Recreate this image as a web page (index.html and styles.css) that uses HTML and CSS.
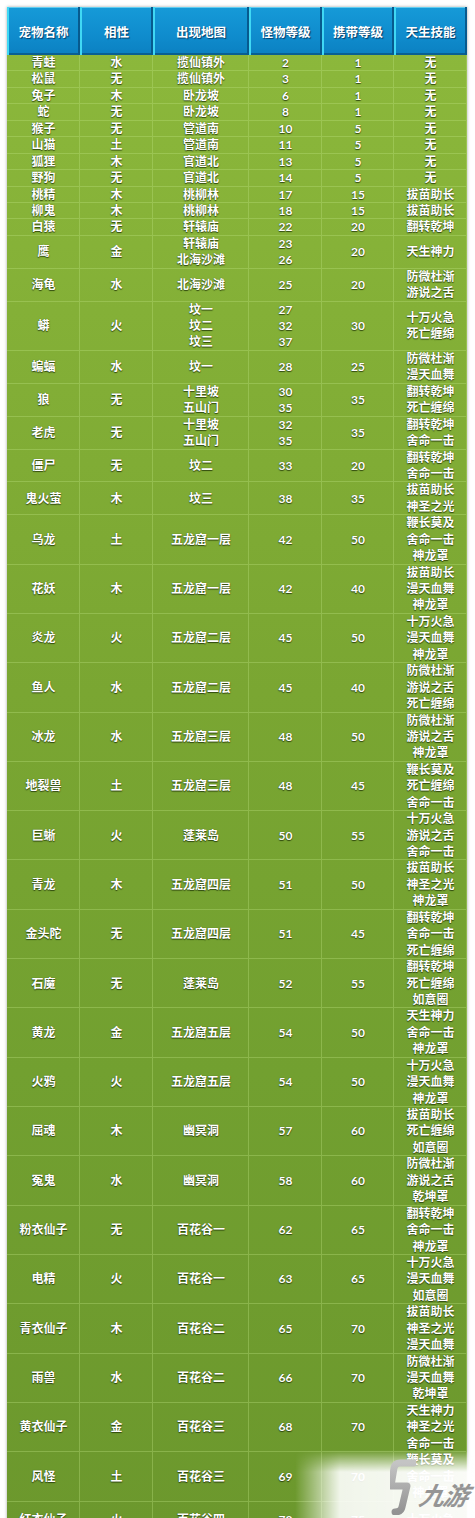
FILE: index.html
```html
<!DOCTYPE html>
<html lang="zh">
<head>
<meta charset="utf-8">
<title>宠物表</title>
<link rel="stylesheet" href="styles.css">
</head>
<body>
<div class="page">
  <table class="pets">
    <colgroup>
      <col class="c1"><col class="c2"><col class="c3"><col class="c4"><col class="c5"><col class="c6">
    </colgroup>
    <thead>
      <tr><th>宠物名称</th><th>相性</th><th>出现地图</th><th>怪物等级</th><th>携带等级</th><th>天生技能</th></tr>
    </thead>
    <tbody>
      <tr><td>青蛙</td><td>水</td><td>揽仙镇外</td><td>2</td><td>1</td><td>无</td></tr>
      <tr><td>松鼠</td><td>无</td><td>揽仙镇外</td><td>3</td><td>1</td><td>无</td></tr>
      <tr><td>兔子</td><td>木</td><td>卧龙坡</td><td>6</td><td>1</td><td>无</td></tr>
      <tr><td>蛇</td><td>无</td><td>卧龙坡</td><td>8</td><td>1</td><td>无</td></tr>
      <tr><td>猴子</td><td>无</td><td>管道南</td><td>10</td><td>5</td><td>无</td></tr>
      <tr><td>山猫</td><td>土</td><td>管道南</td><td>11</td><td>5</td><td>无</td></tr>
      <tr><td>狐狸</td><td>木</td><td>官道北</td><td>13</td><td>5</td><td>无</td></tr>
      <tr><td>野狗</td><td>无</td><td>官道北</td><td>14</td><td>5</td><td>无</td></tr>
      <tr><td>桃精</td><td>木</td><td>桃柳林</td><td>17</td><td>15</td><td>拔苗助长</td></tr>
      <tr><td>柳鬼</td><td>木</td><td>桃柳林</td><td>18</td><td>15</td><td>拔苗助长</td></tr>
      <tr><td>白猿</td><td>无</td><td>轩辕庙</td><td>22</td><td>20</td><td>翻转乾坤</td></tr>
      <tr><td>鹰</td><td>金</td><td>轩辕庙<br>北海沙滩</td><td>23<br>26</td><td>20</td><td>天生神力</td></tr>
      <tr><td>海龟</td><td>水</td><td>北海沙滩</td><td>25</td><td>20</td><td>防微杜渐<br>游说之舌</td></tr>
      <tr><td>蟒</td><td>火</td><td>坟一<br>坟二<br>坟三</td><td>27<br>32<br>37</td><td>30</td><td>十万火急<br>死亡缠绵</td></tr>
      <tr><td>蝙蝠</td><td>水</td><td>坟一</td><td>28</td><td>25</td><td>防微杜渐<br>漫天血舞</td></tr>
      <tr><td>狼</td><td>无</td><td>十里坡<br>五山门</td><td>30<br>35</td><td>35</td><td>翻转乾坤<br>死亡缠绵</td></tr>
      <tr><td>老虎</td><td>无</td><td>十里坡<br>五山门</td><td>32<br>35</td><td>35</td><td>翻转乾坤<br>舍命一击</td></tr>
      <tr><td>僵尸</td><td>无</td><td>坟二</td><td>33</td><td>20</td><td>翻转乾坤<br>舍命一击</td></tr>
      <tr><td>鬼火萤</td><td>木</td><td>坟三</td><td>38</td><td>35</td><td>拔苗助长<br>神圣之光</td></tr>
      <tr><td>乌龙</td><td>土</td><td>五龙窟一层</td><td>42</td><td>50</td><td>鞭长莫及<br>舍命一击<br>神龙罩</td></tr>
      <tr><td>花妖</td><td>木</td><td>五龙窟一层</td><td>42</td><td>40</td><td>拔苗助长<br>漫天血舞<br>神龙罩</td></tr>
      <tr><td>炎龙</td><td>火</td><td>五龙窟二层</td><td>45</td><td>50</td><td>十万火急<br>漫天血舞<br>神龙罩</td></tr>
      <tr><td>鱼人</td><td>水</td><td>五龙窟二层</td><td>45</td><td>40</td><td>防微杜渐<br>游说之舌<br>死亡缠绵</td></tr>
      <tr><td>冰龙</td><td>水</td><td>五龙窟三层</td><td>48</td><td>50</td><td>防微杜渐<br>游说之舌<br>神龙罩</td></tr>
      <tr><td>地裂兽</td><td>土</td><td>五龙窟三层</td><td>48</td><td>45</td><td>鞭长莫及<br>死亡缠绵<br>舍命一击</td></tr>
      <tr><td>巨蜥</td><td>火</td><td>蓬莱岛</td><td>50</td><td>55</td><td>十万火急<br>游说之舌<br>舍命一击</td></tr>
      <tr><td>青龙</td><td>木</td><td>五龙窟四层</td><td>51</td><td>50</td><td>拔苗助长<br>神圣之光<br>神龙罩</td></tr>
      <tr><td>金头陀</td><td>无</td><td>五龙窟四层</td><td>51</td><td>45</td><td>翻转乾坤<br>舍命一击<br>死亡缠绵</td></tr>
      <tr><td>石魔</td><td>无</td><td>蓬莱岛</td><td>52</td><td>55</td><td>翻转乾坤<br>死亡缠绵<br>如意圈</td></tr>
      <tr><td>黄龙</td><td>金</td><td>五龙窟五层</td><td>54</td><td>50</td><td>天生神力<br>舍命一击<br>神龙罩</td></tr>
      <tr><td>火鸦</td><td>火</td><td>五龙窟五层</td><td>54</td><td>50</td><td>十万火急<br>漫天血舞<br>神龙罩</td></tr>
      <tr><td>屈魂</td><td>木</td><td>幽冥洞</td><td>57</td><td>60</td><td>拔苗助长<br>死亡缠绵<br>如意圈</td></tr>
      <tr><td>冤鬼</td><td>水</td><td>幽冥洞</td><td>58</td><td>60</td><td>防微杜渐<br>游说之舌<br>乾坤罩</td></tr>
      <tr><td>粉衣仙子</td><td>无</td><td>百花谷一</td><td>62</td><td>65</td><td>翻转乾坤<br>舍命一击<br>神龙罩</td></tr>
      <tr><td>电精</td><td>火</td><td>百花谷一</td><td>63</td><td>65</td><td>十万火急<br>漫天血舞<br>如意圈</td></tr>
      <tr><td>青衣仙子</td><td>木</td><td>百花谷二</td><td>65</td><td>70</td><td>拔苗助长<br>神圣之光<br>漫天血舞</td></tr>
      <tr><td>雨兽</td><td>水</td><td>百花谷二</td><td>66</td><td>70</td><td>防微杜渐<br>漫天血舞<br>乾坤罩</td></tr>
      <tr><td>黄衣仙子</td><td>金</td><td>百花谷三</td><td>68</td><td>70</td><td>天生神力<br>神圣之光<br>舍命一击</td></tr>
      <tr><td>风怪</td><td>土</td><td>百花谷三</td><td>69</td><td>70</td><td>鞭长莫及<br>舍命一击<br>神龙罩</td></tr>
      <tr class="last"><td>红衣仙子</td><td>火</td><td>百花谷四</td><td>72</td><td>75</td><td>十万火急</td></tr>
    </tbody>
  </table>

  <div class="fade"></div>
  <div class="brand">
    <svg class="brand-mark" viewBox="0 0 26 56" width="26" height="56" aria-hidden="true">
      <defs>
        <linearGradient id="bm" x1="0" y1="0" x2="0" y2="1">
          <stop offset="0" stop-color="#c4c4c4"/>
          <stop offset="1" stop-color="#939393"/>
        </linearGradient>
      </defs>
      <path d="M24 4 L10 4 Q5 4 4 9 L1 27 L17 27 L12 48 Q11 53 5 53" fill="none" stroke="url(#bm)" stroke-width="7" stroke-linejoin="round" stroke-linecap="round"/>
    </svg>
    <span class="brand-text">九游</span>
  </div>
</div>
</body>
</html>
```

FILE: styles.css
```css
html, body {
  margin: 0;
  padding: 0;
  background: #ffffff;
}

.page {
  position: relative;
  width: 475px;
  height: 1518px;
  overflow: hidden;
  background: #ffffff;
  padding-top: 7px;
  box-sizing: border-box;
}

.pets {
  margin-left: 7px;
  width: 460px;
  table-layout: fixed;
  border-collapse: collapse;
  border-spacing: 0;
  background: linear-gradient(180deg, #8db93c 0%, #84b037 20%, #7aa632 45%, #72a030 70%, #6c982d 100%);
  box-shadow: 0 0 3px rgba(0, 0, 0, 0.35);
  font-family: Lato, "Noto Sans CJK SC", sans-serif;
  font-weight: 700;
  color: #ffffff;
  text-align: center;
}

.c1 { width: 73px; }
.c2 { width: 73px; }
.c3 { width: 96px; }
.c4 { width: 73px; }
.c5 { width: 72px; }
.c6 { width: 73px; }

.pets th {
  height: 48px;
  padding: 0;
  font-size: 12.5px;
  font-weight: 700;
  font-family: "Noto Sans CJK SC", sans-serif;
  background: linear-gradient(180deg, #169ad8 0%, #0f8ccd 60%, #0b80c1 100%);
  box-shadow: inset 2px 0 0 #40d8f4, inset -2px 0 0 #075a8e, inset 0 1px 0 #62cdf0, inset 0 -2px 0 #0a5f92;
  text-shadow: 1px 1px 1px rgba(0, 40, 80, 0.8);
}

.pets td {
  padding: 0;
  font-size: 12px;
  line-height: 16.43px;
  vertical-align: middle;
  box-shadow: inset -1px -1px 0 rgba(190, 225, 130, 0.35);
  text-shadow: 0 1px 1px rgba(30, 50, 5, 0.8), 0 0 1px rgba(30, 50, 5, 0.6);
  white-space: nowrap;
}

.pets .last td {
  vertical-align: top;
  padding-top: 10px;
}

.fade {
  position: absolute;
  left: 295px;
  top: 1450px;
  width: 180px;
  height: 68px;
  background: linear-gradient(90deg, rgba(255, 255, 255, 0) 0px, rgba(255, 255, 255, 0.9) 45px, rgba(255, 255, 255, 0.97) 100%);
  -webkit-mask-image: linear-gradient(180deg, transparent 0px, #000 22px);
  mask-image: linear-gradient(180deg, transparent 0px, #000 22px);
}

.brand {
  position: absolute;
  left: 390px;
  top: 1459px;
  display: flex;
  align-items: flex-end;
  gap: 4px;
}

.brand-mark {
  display: block;
}

.brand-text {
  font-family: "Noto Sans CJK SC", sans-serif;
  font-weight: 700;
  font-style: italic;
  font-size: 25px;
  line-height: 25px;
  color: #959595;
  margin-bottom: 8px;
  transform: skewX(-12deg);
  letter-spacing: -1px;
}
```
